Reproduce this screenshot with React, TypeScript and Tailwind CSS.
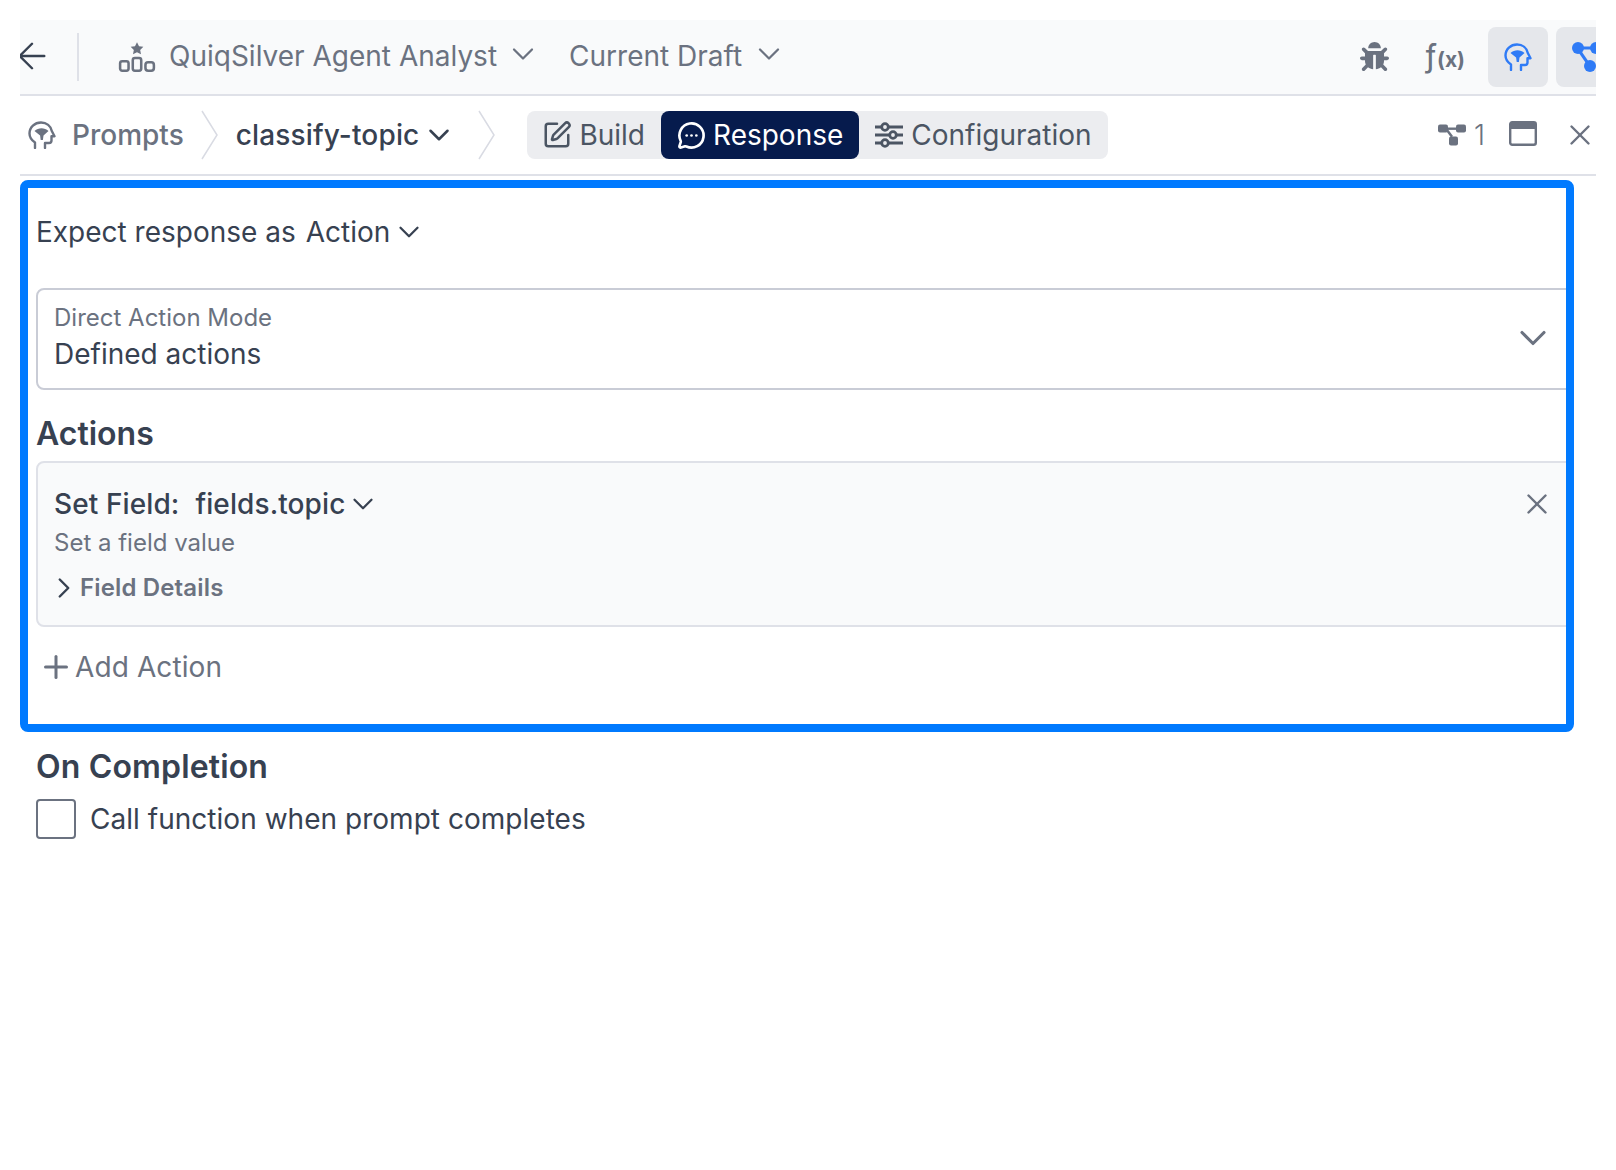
import { ChevronDown, ChevronRight, ArrowLeft, X, Plus, SquarePen, MessageCircleMore } from 'lucide-react'
import { FaBug } from 'react-icons/fa'

function AgentIcon() {
  return (
    <svg width="38" height="32" viewBox="0 0 36 30" fill="none" className="shrink-0">
      <path d="M18 1l1.9 3.9 4.1.5-3 2.9.8 4.1-3.8-2-3.8 2 .8-4.1-3-2.9 4.1-.5z" fill="#6b7280" />
      <rect x="2" y="19" width="8" height="9" rx="2" stroke="#6b7280" strokeWidth="2.4" />
      <rect x="14" y="16" width="8" height="12" rx="2" stroke="#6b7280" strokeWidth="2.4" />
      <rect x="26" y="20" width="8" height="8" rx="2.5" stroke="#6b7280" strokeWidth="2.4" />
    </svg>
  )
}

// head profile with the fan shaped brain, used for Prompts
function HeadIcon({ className }: { className?: string }) {
  return (
    <svg viewBox="0 0 28 28" fill="none" className={className}>
      <path
        d="M7 27v-5.5C3.6 19.200 1.500 16 1.500 12.500 1.500 6 6.800 1.500 13 1.500c5.600 0 9.800 3.500 10.800 8.500l2.700 5.200h-3v4.300c0 1.500-1 2.500-2.500 2.500H17V27"
        stroke="currentColor"
        strokeWidth="2.400"
        strokeLinecap="round"
        strokeLinejoin="round"
      />
      <path d="M6.500 10C10.500 6.200 16.500 6.200 20.500 10l-5 4.500-.6 4.500h-2.200l-.6-4.500z" fill="currentColor" />
    </svg>
  )
}

function NodesIcon({ className }: { className?: string }) {
  return (
    <svg viewBox="0 0 28 24" fill="currentColor" className={className}>
      <rect x="0" y="2" width="10" height="8" rx="2" />
      <rect x="18" y="2" width="10" height="8" rx="2" />
      <rect x="11" y="14" width="9" height="9" rx="2" />
      <path d="M8 5h12v2.400H8z" />
      <path d="M7 7l6 8 2-1.600-6-8z" />
    </svg>
  )
}

function FlowBlueIcon() {
  return (
    <svg width="28" height="30" viewBox="0 0 28 30" fill="#2f7bf6" className="shrink-0">
      <circle cx="6" cy="6" r="6" />
      <circle cx="24" cy="6" r="6" />
      <circle cx="18" cy="24" r="6" />
      <path d="M6 4.500h18v3H6z" />
      <path d="M4.500 7.500l11 16 2.600-1.800-11-16z" />
    </svg>
  )
}

function SlidersIcon() {
  return (
    <svg width="28" height="26" viewBox="0 0 28 26" fill="none" stroke="#4b5563" strokeWidth="2.800" className="shrink-0">
      <path d="M0 5h6M14 5h14M0 13h14M22 13h6M0 21h6M14 21h14" />
      <circle cx="10" cy="5" r="3.300" />
      <circle cx="18" cy="13" r="3.300" />
      <circle cx="10" cy="21" r="3.300" />
    </svg>
  )
}

function WindowIcon() {
  return (
    <svg width="28" height="25" viewBox="0 0 28 25" className="shrink-0">
      <rect x="1.200" y="1.200" width="25.600" height="22.600" rx="2" fill="none" stroke="#6b7280" strokeWidth="2.400" />
      <rect x="1" y="1" width="26" height="7" fill="#6b7280" />
    </svg>
  )
}

function BreadcrumbSep() {
  return (
    <svg width="18" height="50" viewBox="0 0 18 50" fill="none" stroke="#d9dbe3" strokeWidth="1.500" className="shrink-0">
      <path d="M1 1l15 24L1 49" />
    </svg>
  )
}

export default function App() {
  return (
    <div className="w-[1616px] h-[1170px] bg-white pt-5 pl-5 overflow-hidden text-[#374151] [font-family:Inter,sans-serif]">
      <div className="w-[1576px] overflow-hidden">
        {/* Top bar */}
        <div className="h-[76px] bg-[#f9fafb] border-b-2 border-[#dfe1e8] flex items-center">
          <ArrowLeft size={42} strokeWidth={1.400} className="shrink-0 -ml-[9px] -mt-0.5 mr-0.5 text-[#374151]" />
          <div className="w-0.5 h-12 bg-[#dfe1e8] ml-[22px] mr-[39px]" />
          <AgentIcon />
          <span className="ml-[13px] -mt-0.5 text-[28px] text-[#6b7280] whitespace-nowrap">QuiqSilver Agent Analyst</span>
          <ChevronDown size={36} strokeWidth={1.500} className="ml-2 -mt-1.5 shrink-0 text-[#6b7280]" />
          <span className="ml-7 -mt-0.5 text-[28px] text-[#6b7280] whitespace-nowrap">Current Draft</span>
          <ChevronDown size={36} strokeWidth={1.500} className="ml-[9px] -mt-1.5 shrink-0 text-[#6b7280]" />
          <div className="ml-auto flex items-center shrink-0">
            <FaBug size={29} className="text-[#6b7280] mr-9 -mt-0.5" />
            <span className="mr-[23px] text-[#6b7280] whitespace-nowrap leading-none -mt-0.5">
              <span className="text-[32px]">ƒ</span>
              <span className="text-[21px] font-bold">(x)</span>
            </span>
            <div className="w-[60px] h-[60px] rounded-lg bg-[#e5e7eb] flex items-center justify-center">
              <HeadIcon className="w-7 h-7 text-[#2f7bf6]" />
            </div>
            <div className="ml-2 w-[60px] h-[60px] -mr-5 rounded-lg bg-[#e5e7eb] flex items-center justify-start pl-4">
              <FlowBlueIcon />
            </div>
          </div>
        </div>

        {/* Breadcrumb row */}
        <div className="h-20 border-b-2 border-[#dfe1e8] flex items-center">
          <HeadIcon className="ml-2 w-7 h-7 text-[#6b7280] shrink-0" />
          <span className="ml-4 text-[28px] font-medium text-[#6b7280]">Prompts</span>
          <div className="ml-[17px] mr-[17px]"><BreadcrumbSep /></div>
          <span className="text-[28px] font-medium tracking-[0.15px] text-[#374151] whitespace-nowrap">classify-topic</span>
          <ChevronDown size={34} strokeWidth={1.800} className="ml-[3px] shrink-0 text-[#374151]" />
          <div className="ml-[22px] mr-[31px]"><BreadcrumbSep /></div>
          <div className="h-12 flex items-center bg-[#ecedf0] rounded-lg">
            <div className="h-12 flex items-center gap-[7px] pl-[15px] pr-4 text-[28px] text-[#4b5563]">
              <SquarePen size={30} strokeWidth={2} />
              <span>Build</span>
            </div>
            <div className="h-12 flex items-center gap-[7px] px-4 rounded-lg bg-[#061b4d] text-white text-[28px]">
              <MessageCircleMore size={29} strokeWidth={2.200} />
              <span>Response</span>
            </div>
            <div className="h-12 flex items-center gap-2 px-4 text-[28px] text-[#4b5563]">
              <SlidersIcon />
              <span>Configuration</span>
            </div>
          </div>
          <div className="ml-auto flex items-center text-[#6b7280]">
            <NodesIcon className="w-[28px] h-[25px] -mt-0.5" />
            <span className="ml-2 -mr-px text-[28px] font-light">1</span>
            <div className="ml-[25px] -mt-1"><WindowIcon /></div>
            <X size={34} strokeWidth={1.700} className="ml-[26px] -mr-px" />
          </div>
        </div>

        {/* Highlighted response section */}
        <div className="mt-1 w-[1554px] h-[552px] border-8 border-[#007aff] rounded-lg overflow-hidden bg-white">
          <div className="pl-2 w-[1560px]">
            <div className="mt-[22px] flex items-center text-[28px] leading-[44px]">
              <span>Expect response as</span>
              <span className="ml-2.5">Action</span>
              <ChevronDown size={34} strokeWidth={1.600} className="ml-0.5" />
            </div>
            <div className="mt-[34px] h-[102px] border-2 border-[#c9ccd6] rounded-lg flex items-center pl-4 pr-8 pb-0.5">
              <div className="flex-1">
                <div className="text-2xl leading-8 text-[#6b7280]">Direct Action Mode</div>
                <div className="text-[28px] leading-10">Defined actions</div>
              </div>
              <ChevronDown size={44} strokeWidth={1.700} className="text-[#6b7280] -mr-px" />
            </div>
            <div className="mt-6 text-[32px] leading-10 font-semibold">Actions</div>
            <div className="mt-[7px] h-[166px] border-2 border-[#dfe1e8] rounded-lg bg-[#f9fafb] pl-4 pr-8 pt-[21px]">
              <div className="flex items-center h-10">
                <span className="text-[28px] leading-10 font-medium tracking-[0.1px]">Set Field:</span>
                <span className="ml-4 text-[28px] leading-10 font-medium tracking-[0.1px]">fields.topic</span>
                <ChevronDown size={34} strokeWidth={1.600} className="ml-px" />
                <X size={34} strokeWidth={1.700} className="ml-auto text-[#6b7280]" />
              </div>
              <div className="text-2xl leading-8 mt-[3px] text-[#6b7280]">Set a field value</div>
              <div className="mt-[13px] flex items-center h-8">
                <ChevronRight size={34} strokeWidth={1.700} className="-ml-[7px] shrink-0" />
                <span className="-ml-px text-2xl leading-8 font-semibold tracking-[0.15px] text-[#6b7280]">Field Details</span>
              </div>
            </div>
            <div className="mt-5 flex items-center text-[28px] leading-10 text-[#6b7280]">
              <Plus size={36} strokeWidth={2} className="ml-0.5" />
              <span className="ml-px tracking-[0.1px]">Add Action</span>
            </div>
          </div>
        </div>

        {/* On completion */}
        <div className="pl-4">
          <div className="mt-[15px] text-[32px] leading-10 font-semibold tracking-[0.15px]">On Completion</div>
          <div className="mt-[11px] flex items-center">
            <div className="w-10 h-10 border-2 border-[#6b7280] rounded-sm bg-white" />
            <span className="ml-[14px] text-[28px] tracking-[0.03px]">Call function when prompt completes</span>
          </div>
        </div>
      </div>
    </div>
  )
}
